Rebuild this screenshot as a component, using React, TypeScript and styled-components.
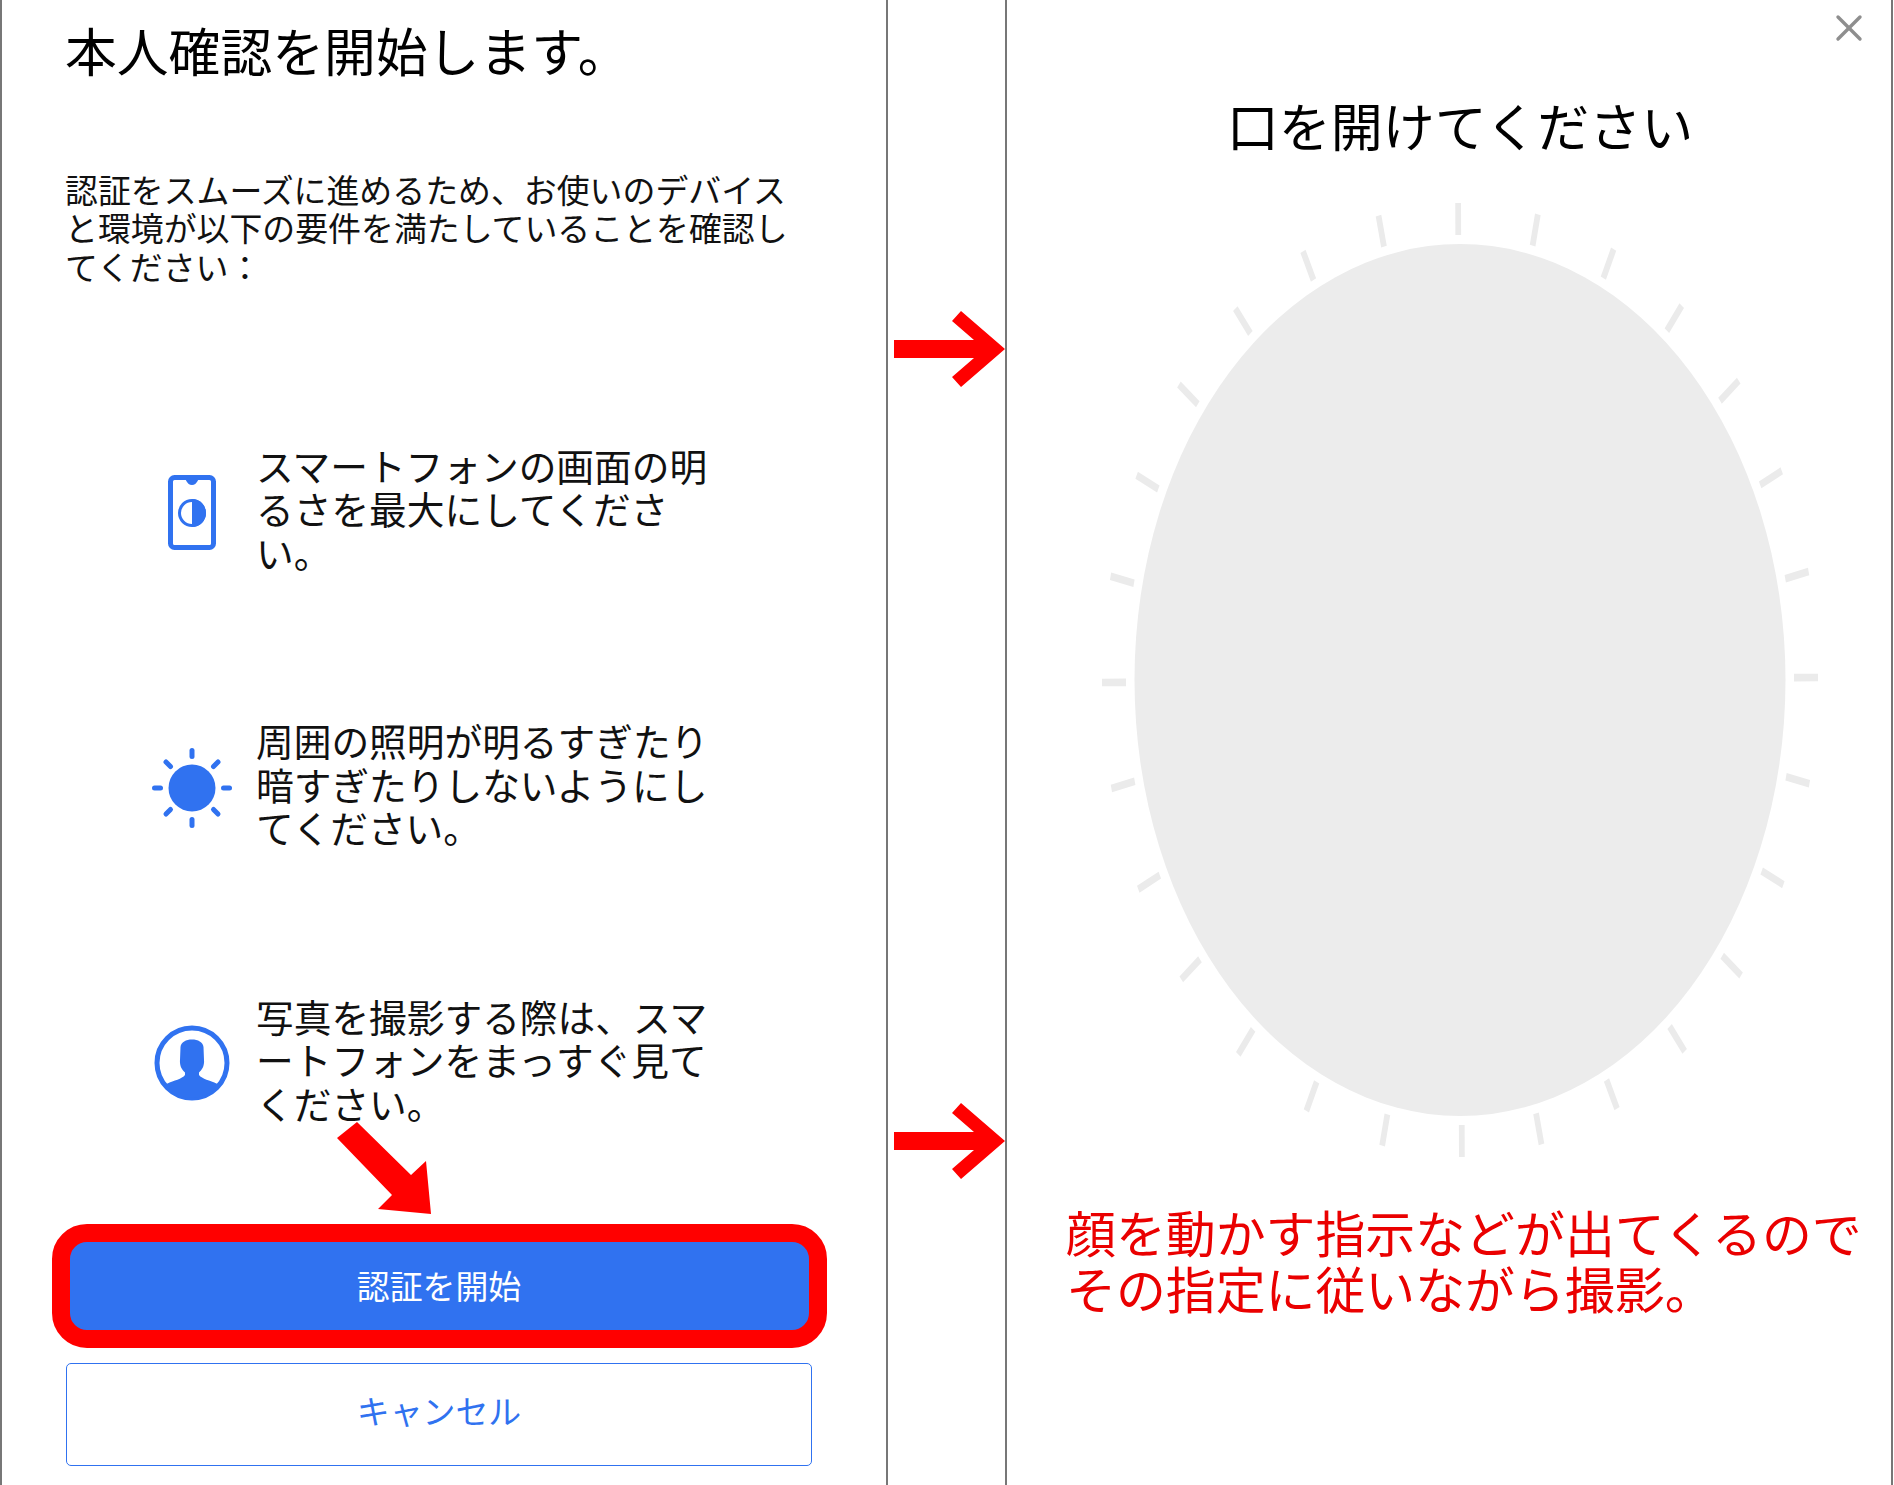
import React from "react";
import styled, { createGlobalStyle } from "styled-components";

const BLUE = "#3072f0";
const RULE = "#777777";
const FONT = '"Noto Sans CJK JP", "Noto Sans", sans-serif';

const Global = createGlobalStyle`
  html, body { margin: 0; padding: 0; background: #fff; }
  body { font-family: ${FONT}; color: #000; }
  * { box-sizing: border-box; }
`;

const Page = styled.div`
  display: grid;
  grid-template-columns: 888px 117px 888px;
  width: 1894px;
  height: 1485px;
  overflow: hidden;
`;

const LeftPanel = styled.section`
  position: relative;
  display: flex;
  flex-direction: column;
  padding: 22px 0 0 63px;
  border-left: 2px solid ${RULE};
  border-right: 2px solid ${RULE};
`;

const Title = styled.h1`
  margin: 0;
  font-size: 51.8px;
  line-height: 56px;
  font-weight: 400;
`;

const Intro = styled.p`
  margin: 91.6px 0 0;
  font-size: 32.9px;
  line-height: 38.6px;
  color: #111;
  white-space: nowrap;
`;

const Checklist = styled.ul`
  display: flex;
  flex-direction: column;
  gap: 145.5px;
  margin: 157.4px 0 0 79px;
  padding: 0;
  list-style: none;
`;

const Check = styled.li`
  display: grid;
  grid-template-columns: 96px 1fr;
  column-gap: 16px;
  align-items: center;
  height: 130px;
`;

const CheckIcon = styled.svg`
  justify-self: center;
  display: block;
  fill: ${BLUE};
  transform: translateY(4px);
`;

const CheckText = styled.span`
  font-size: 37.7px;
  line-height: 43.5px;
  color: #111;
  white-space: nowrap;
`;

const Actions = styled.div`
  display: flex;
  flex-direction: column;
  gap: 26px;
  width: 746px;
  margin: 112px 0 0 1px;
`;

const PrimaryButton = styled.button`
  position: relative;
  height: 101px;
  padding: 0 0 4px;
  border: 0;
  border-radius: 5px;
  background: ${BLUE};
  color: #fff;
  font: 400 32.9px ${FONT};
`;

const Highlight = styled.span`
  position: absolute;
  inset: -12px -15px -11px -14px;
  border: 18px solid #ff0000;
  border-radius: 35px;
`;

const SecondaryButton = styled.button`
  height: 103px;
  padding: 0 0 9px;
  border: 1.5px solid ${BLUE};
  border-radius: 5px;
  background: #fff;
  color: ${BLUE};
  font: 400 32.9px ${FONT};
`;

const PointerArrow = styled.svg`
  position: absolute;
  left: 335px;
  top: 1122px;
  fill: #ff0000;
`;

const Gutter = styled.div`
  position: relative;
`;

const NextArrow = styled.svg<{ $top: number }>`
  position: absolute;
  left: 6px;
  top: ${(p) => p.$top}px;
  fill: #ff0000;
`;

const RightPanel = styled.section`
  position: relative;
  display: flex;
  flex-direction: column;
  align-items: center;
  padding: 94.5px 0 0 22px;
  border-left: 2px solid ${RULE};
  border-right: 2px solid ${RULE};
`;

const CloseButton = styled.svg`
  position: absolute;
  top: 14px;
  right: 28px;
  stroke: #8e8e8e;
  stroke-width: 3.4;
  stroke-linecap: round;
  fill: none;
`;

const Prompt = styled.h2`
  margin: 0;
  font-size: 52px;
  line-height: 60px;
  font-weight: 400;
`;

const FaceGuide = styled.svg`
  display: block;
  margin-top: 45.5px;
  flex: none;
`;

const Oval = styled.ellipse`
  fill: #ececec;
`;

const Tick = styled.line`
  stroke: #ebebeb;
  stroke-width: 1.6;
`;

const Note = styled.p`
  align-self: flex-start;
  margin: 44.4px 0 0 37px;
  font-size: 49.9px;
  line-height: 55.5px;
  color: #ea0000;
  white-space: nowrap;
`;

const ticks = Array.from({ length: 28 }, (_, i) => (i * 360) / 28);

function PhoneIcon() {
  return (
    <CheckIcon width="49" height="75" viewBox="0 0 49 75">
      <rect x="2.5" y="2.5" width="43" height="70" rx="4" fill="none" stroke={BLUE} strokeWidth="5" />
      <path d="M16 3C18 3 18.5 10 24 10C29.5 10 30 3 32 3Z" />
      <circle cx="24" cy="38" r="12.5" fill="none" stroke={BLUE} strokeWidth="3" />
      <path d="M24 24A14 14 0 0 1 24 52Z" />
    </CheckIcon>
  );
}

function SunIcon() {
  const rays = [
    [0, -31.5, 0, -37.5],
    [0, 31.5, 0, 37.5],
    [-31.5, 0, -37.5, 0],
    [31.5, 0, 37.5, 0],
    [-21.5, -21.5, -26, -26],
    [21.5, -21.5, 26, -26],
    [-21.5, 21.5, -26, 26],
    [21.5, 21.5, 26, 26],
  ];
  return (
    <CheckIcon width="84" height="84" viewBox="-42 -42 84 84">
      <circle r="23.5" />
      {rays.map(([a, b, c, d], i) => (
        <line key={i} x1={a} y1={b} x2={c} y2={d} stroke={BLUE} strokeWidth="5" strokeLinecap="round" />
      ))}
    </CheckIcon>
  );
}

function PersonIcon() {
  return (
    <CheckIcon width="76" height="76" viewBox="0 0 76 76">
      <circle cx="38" cy="38" r="35" fill="none" stroke={BLUE} strokeWidth="5" />
      <path d="M11.5 60.5L13 58.7C20 55.5 28 54 31 50L31 47.5C28 45 25.5 41 26 35L26.5 22C27 17 32 14.5 38 14.5C44 14.5 49 17 49.5 22L50 35C50.5 41 48 45 45 47.5L45 50C48 54 56 55.5 63 58.7L64.5 60.5A35 35 0 0 1 11.5 60.5Z" />
    </CheckIcon>
  );
}

function ArrowRight({ top }: { top: number }) {
  return (
    <NextArrow $top={top} width="111" height="76" viewBox="0 0 111 76">
      <polygon points="0,29 80,29 58,10 67,0 111,38 67,76 58,66 80,47 0,47" />
    </NextArrow>
  );
}

export default function App() {
  return (
    <Page>
      <Global />
      <LeftPanel>
        <Title>本人確認を開始します。</Title>
        <Intro>
          認証をスムーズに進めるため、お使いのデバイス<br />
          と環境が以下の要件を満たしていることを確認し<br />
          てください：
        </Intro>
        <Checklist>
          <Check>
            <PhoneIcon />
            <CheckText>
              スマートフォンの画面の明<br />
              るさを最大にしてくださ<br />
              い。
            </CheckText>
          </Check>
          <Check>
            <SunIcon />
            <CheckText>
              周囲の照明が明るすぎたり<br />
              暗すぎたりしないようにし<br />
              てください。
            </CheckText>
          </Check>
          <Check>
            <PersonIcon />
            <CheckText>
              写真を撮影する際は、スマ<br />
              ートフォンをまっすぐ見て<br />
              ください。
            </CheckText>
          </Check>
        </Checklist>
        <Actions>
          <PrimaryButton>
            認証を開始
            <Highlight />
          </PrimaryButton>
          <SecondaryButton>キャンセル</SecondaryButton>
        </Actions>
        <PointerArrow width="94" height="92" viewBox="0 0 94 92">
          <polygon points="20,0 0,16 55,73 41,87 94,92 89,39 74,53" />
        </PointerArrow>
      </LeftPanel>
      <Gutter>
        <ArrowRight top={311} />
        <ArrowRight top={1103} />
      </Gutter>
      <RightPanel>
        <CloseButton width="28" height="28" viewBox="0 0 28 28">
          <line x1="3" y1="3" x2="25" y2="25" />
          <line x1="25" y1="3" x2="3" y2="25" />
        </CloseButton>
        <Prompt>口を開けてください</Prompt>
        <FaceGuide width="720" height="960" viewBox="0 0 720 960">
          <Oval cx="360" cy="480" rx="325.5" ry="436" />
          <g transform="translate(360 480) scale(3.58 4.77) rotate(-0.3)">
            {ticks.map((deg) => (
              <Tick key={deg} x1="0" y1="-93.3" x2="0" y2="-100" transform={`rotate(${deg})`} />
            ))}
          </g>
        </FaceGuide>
        <Note>
          顔を動かす指示などが出てくるので<br />
          その指定に従いながら撮影。
        </Note>
      </RightPanel>
    </Page>
  );
}
